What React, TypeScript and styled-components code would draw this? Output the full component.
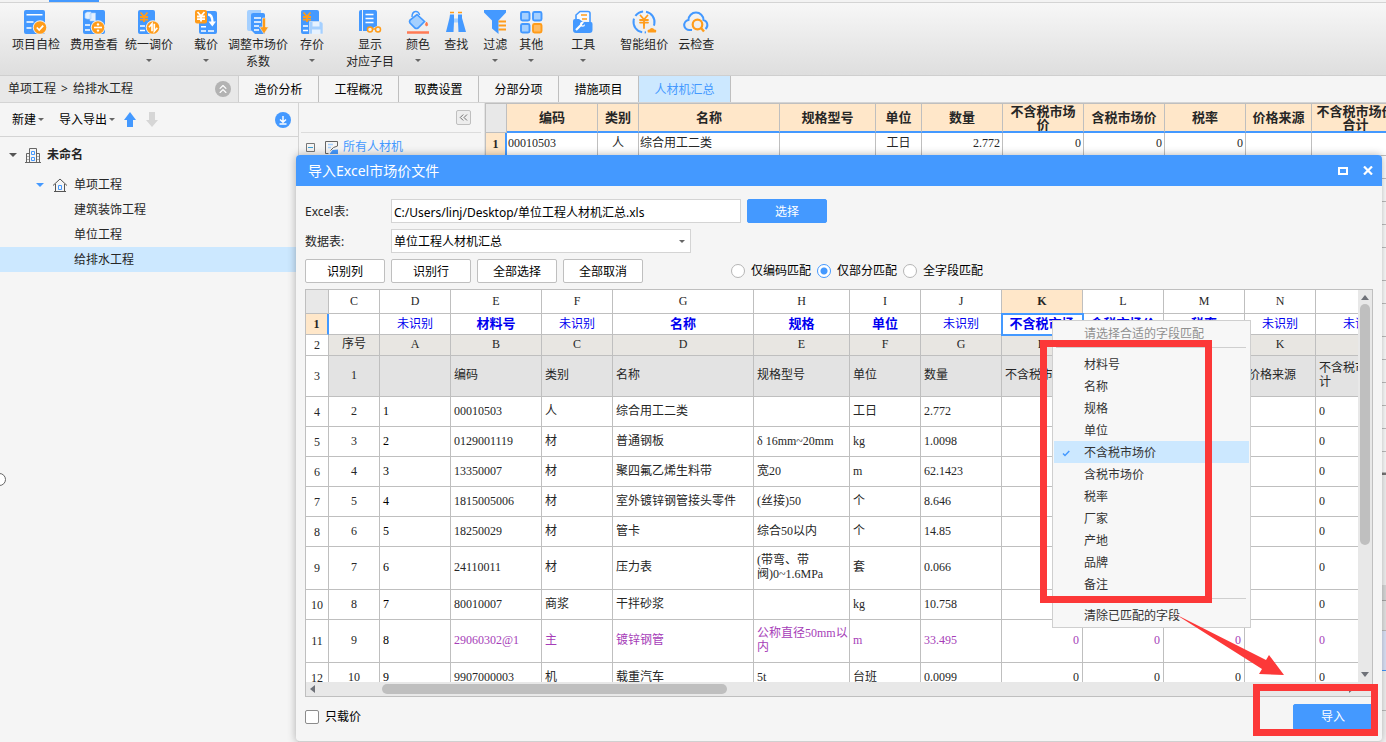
import React from 'react';
import styled, { createGlobalStyle, css } from 'styled-components';
import { ChevronsLeft, ChevronsUp } from 'lucide-react';

const UI_FONT = '"Noto Sans", "Noto Sans CJK SC", sans-serif';
const GRID_FONT = '"Liberation Serif", "Noto Sans CJK SC", serif';
const BLUE = '#4499ff';
const ORANGE = '#ff9c1a';
const LIGHT = '#a5d0ff';
const PICK = '#cce8ff';
const PEACH = '#ffe7c9';
const LINE = '#bfbfbf';
const RED = '#fc3838';

const GlobalStyle = createGlobalStyle`
  * { box-sizing: border-box; }
  body { margin: 0; background: #f5f5f5; font: 12px/16px ${UI_FONT}; color: #262626; }
  button, input, select { font: inherit; color: inherit; }
  button { cursor: pointer; }
  a { color: inherit; text-decoration: none; }
`;

const Shell = styled.div`
  position: relative;
  display: flex;
  flex-direction: column;
  height: 100vh;
  overflow: hidden;
`;

/* ---------- ribbon ---------- */
const TopStrip = styled.div`
  flex: none;
  height: 3px;
  padding-left: 49px;
  background: #f3f3f3;
  border-bottom: 1px solid #d4d4d4;
`;
const ActiveMark = styled.div`
  width: 50px;
  height: 2px;
  background: ${BLUE};
`;
const Ribbon = styled.header`
  flex: none;
  display: flex;
  height: 73px;
  padding: 7px 12px 0;
  background: linear-gradient(#f7f7f7, #dedede);
  border-bottom: 1px solid #cfcfcf;
`;
const RibbonButton = styled.button<{ $before: number }>`
  display: flex;
  flex: none;
  flex-direction: column;
  align-items: center;
  height: 62px;
  margin: 0 0 0 ${p => p.$before}px;
  padding: 0;
  border: 0;
  background: none;
  line-height: 17px;
  white-space: nowrap;

  > svg:first-child { margin-bottom: 2px; overflow: visible; }
`;
const CaretBox = styled.span`
  display: flex;
  align-items: center;
  height: 15px;
`;

/* ---------- tab row ---------- */
const TabRow = styled.nav`
  flex: none;
  display: flex;
  height: 27px;
  border-bottom: 1px solid #d4d4d4;
`;
const Breadcrumb = styled.div`
  flex: none;
  display: flex;
  align-items: center;
  gap: 5px;
  width: 239px;
  padding: 0 7px 0 8px;
  background: #e8e8e8;
  border-right: 1px solid #cfcfcf;
`;
const RoundButton = styled.button<{ $color: string }>`
  display: flex;
  align-items: center;
  justify-content: center;
  width: 16px;
  height: 16px;
  padding: 0;
  border: 0;
  border-radius: 8px;
  background: ${p => p.$color};
  color: #fff;
`;
const Tab = styled.a<{ $active?: boolean }>`
  flex: none;
  display: flex;
  align-items: center;
  justify-content: center;
  width: ${p => (p.$active ? 92 : 80)}px;
  padding-top: 1px;
  border-right: 1px solid ${LINE};
  color: ${p => (p.$active ? BLUE : '#000')};
  background: ${p => (p.$active ? PICK : 'none')};
`;

/* ---------- workspace ---------- */
const Workspace = styled.main`
  flex: 1;
  display: flex;
  min-height: 0;
`;
const ProjectPanel = styled.aside`
  flex: none;
  width: 299px;
  border-right: 1px solid #d4d4d4;
`;
const PanelBar = styled.div`
  display: flex;
  align-items: center;
  height: 34px;
  padding: 0 7px 0 12px;
  border-bottom: 1px solid #d4d4d4;
  color: #000;
`;
const BarButton = styled.button<{ $after?: number }>`
  display: flex;
  align-items: center;
  gap: 2px;
  margin: 0 ${p => p.$after ?? 0}px 0 0;
  padding: 0;
  border: 0;
  background: none;
`;
const Push = styled.div`
  margin-left: auto;
`;
const Tree = styled.ul`
  margin: 0;
  padding: 0;
  list-style: none;
`;
const TreeRow = styled.li<{ $indent: number; $tall?: boolean; $picked?: boolean }>`
  display: flex;
  align-items: center;
  height: ${p => (p.$tall ? 35 : 25)}px;
  padding-left: ${p => p.$indent}px;
  background: ${p => (p.$picked ? PICK : 'none')};

  svg { flex: none; }
  svg + svg { margin: 0 6px 0 8px; }
`;

const FilterPanel = styled.section`
  flex: none;
  width: 186px;
  padding: 0 3px 0 2px;
  border-right: 1px solid #e3e3e3;
`;
const FilterBar = styled.div`
  display: flex;
  justify-content: flex-end;
  height: 30px;
  padding: 7px 10px 0 0;
  border-bottom: 1px solid #dcdcdc;
`;
const SmallButton = styled.button`
  display: flex;
  align-items: center;
  justify-content: center;
  width: 15px;
  height: 15px;
  padding: 0;
  border: 1px solid ${LINE};
  border-radius: 2px;
  background: #ededed;
  color: #555;
`;
const FilterRow = styled.div`
  display: flex;
  align-items: center;
  gap: 5px;
  height: 28px;
  padding-left: 5px;
  color: ${BLUE};

  svg:first-child { margin-right: 5px; }
`;

const ListPanel = styled.section`
  flex: 1;
  min-width: 0;
  overflow: hidden;
`;
const SheetTable = styled.table`
  table-layout: fixed;
  width: 1px;
  border-spacing: 0;
  font: 12px/14px ${GRID_FONT};

  th, td { overflow: hidden; border: solid ${LINE}; border-width: 0 1px 1px 0; }
`;
const MainTable = styled(SheetTable)`
  border-left: 1px solid ${LINE};
  border-top: 1px solid ${LINE};

  thead th {
    height: 29px;
    padding: 0 4px;
    background: ${PEACH};
    border-bottom: 2px solid ${BLUE};
    font-size: 13px;
    line-height: 13px;
  }
  thead td { background: #e8e8e8; }
  tbody th { background: ${PEACH}; border-right: 2px solid ${BLUE}; }
  tbody td { background: #fff; padding: 0 1px 2px; }
`;
const MainRow = styled.tr<{ $h: number }>`
  height: ${p => p.$h}px;
`;
const MainCell = styled.td<{ $align?: string }>`
  text-align: ${p => p.$align ?? 'left'};
  && { padding-right: ${p => (p.$align === 'right' ? 2 : 1)}px; }
`;
const LowerPane = styled.div`
  border-top: 2px solid #777;
  padding-top: 110px;
`;
const LowerBand = styled.div<{ $h: number; $bg: string; $line: string }>`
  height: ${p => p.$h}px;
  background: ${p => p.$bg};
  border-bottom: 1px solid ${p => p.$line};
`;
const Handle = styled.span`
  position: absolute;
  left: -7px;
  top: 473px;
  width: 13px;
  height: 13px;
  border: 1px solid #666;
  border-radius: 7px;
  background: #fff;
`;

/* ---------- dialog ---------- */
const Dialog = styled.section`
  position: absolute;
  inset: 155px 4px 0 296px;
  display: flex;
  flex-direction: column;
  background: #f5f5f5;
  border-bottom: 1px solid #d0d0d0;
  border-radius: 4px;
  box-shadow: 0 0 8px rgba(0, 0, 0, 0.3);
`;
const TitleBar = styled.div`
  flex: none;
  display: flex;
  align-items: center;
  gap: 15px;
  height: 31px;
  padding: 0 9px 0 12px;
  border-radius: 4px 4px 0 0;
  background: ${BLUE};
  color: #fff;
`;
const Title = styled.h1`
  flex: 1;
  margin: 0;
  font-size: 14px;
  line-height: 20px;
  font-weight: 400;
`;
const WindowButton = styled.button`
  display: flex;
  padding: 0;
  border: 0;
  background: none;
  color: #fff;
`;
const DialogBody = styled.div`
  flex: 1;
  display: flex;
  flex-direction: column;
  gap: 6px;
  min-height: 0;
  padding: 13px 9px 0;
`;
const FormRow = styled.div`
  flex: none;
  display: flex;
  align-items: center;
  gap: 6px;
  height: 24px;
`;
const FieldLabel = styled.label`
  width: 80px;
  padding-top: 1px;
`;
const fieldStyle = css`
  height: 24px;
  padding: 1px 2px 0;
  border: 1px solid #d4d4d4;
  border-radius: 0;
  background: #fff;
  color: #000;
`;
const PathInput = styled.input`
  width: 350px;
  ${fieldStyle}
`;
const SelectWrap = styled.div`
  position: relative;
  display: flex;

  svg { position: absolute; right: 6px; top: 11px; pointer-events: none; }
`;
const SheetSelect = styled.select`
  width: 300px;
  appearance: none;
  ${fieldStyle}
`;
const PushButton = styled.button<{ $primary?: boolean }>`
  width: 80px;
  height: 24px;
  padding: 1px 0 0;
  border: 1px solid ${p => (p.$primary ? BLUE : LINE)};
  border-radius: 2px;
  background: ${p => (p.$primary ? BLUE : '#fff')};
  color: ${p => (p.$primary ? '#fff' : '#000')};
`;
const RadioGroup = styled.div`
  display: flex;
  gap: 6px;
  margin-left: 82px;
  color: #000;
`;
const OptionLabel = styled.label`
  display: flex;
  align-items: center;
  gap: 6px;
`;
const Radio = styled.input`
  appearance: none;
  width: 14px;
  height: 14px;
  margin: 0;
  border: 1px solid #b5b5b5;
  border-radius: 7px;
  background: #fff;

  &:checked {
    border-color: ${BLUE};
    background: radial-gradient(circle, ${BLUE} 3px, #fff 4px);
  }
`;
const Check = styled.input`
  appearance: none;
  width: 14px;
  height: 14px;
  margin: 0;
  border: 1px solid #8c8c8c;
  border-radius: 2px;
  background: #fff;
`;

const Sheet = styled.div`
  flex: 1;
  display: grid;
  grid-template: minmax(0, 1fr) 14px / minmax(0, 1fr) 14px;
  min-height: 0;
  border: 1px solid ${LINE};
  background: #e8e8e8;
`;
const SheetView = styled.div`
  overflow: hidden;
  background: #fff;
`;
const MatchTable = styled(SheetTable)`
  td, th { padding: 0 3px; font-weight: 400; }
`;
const MatchRow = styled.tr<{ $h: number; $bg?: string; $color?: string }>`
  height: ${p => p.$h}px;
  color: ${p => p.$color ?? 'inherit'};

  td { background: ${p => p.$bg ?? '#fff'}; }
`;
const HeadCell = styled.th<{ $on?: boolean }>`
  text-align: center;
  && { padding-bottom: 2px; }
  ${p => p.$on && css`&& { background: ${PEACH}; font-weight: 700; }`}
`;
const RowNumber = styled.th<{ $on?: boolean }>`
  text-align: center;
  color: #262626;
  ${p => p.$on && css`&& { background: ${PEACH}; font-weight: 700; border-right: 2px solid ${BLUE}; }`}
`;
const Corner = styled.td`
  && { background: #e8e8e8; }
`;
const DataCell = styled.td<{ $align?: string; $ink?: string }>`
  text-align: ${p => p.$align ?? 'left'};
  color: ${p => p.$ink ?? 'inherit'};
  && {
    padding-bottom: 2px;
    padding-left: ${p => (p.$align === 'center' ? 0 : 3)}px;
    padding-right: ${p => (p.$align === 'right' ? 3 : 0)}px;
  }
`;
const FieldCell = styled.td<{ $bold: boolean; $on: boolean }>`
  text-align: center;
  color: #0000f0;
  && {
    padding-bottom: 1px;
    font-weight: ${p => (p.$bold ? 700 : 400)};
    font-size: ${p => (p.$bold ? 13 : 12)}px;
  }
  ${p => p.$on && css`outline: 2px solid ${BLUE}; outline-offset: -1px;`}
`;
const OneLine = styled.div`
  height: 14px;
  overflow: hidden;
`;
const Wide = styled.span`
  display: block;
  white-space: nowrap;
`;

const VBar = styled.div`
  display: flex;
  flex-direction: column;
  align-items: center;
  padding: 5px 0;
`;
const VThumb = styled.div`
  flex: 0 0 63%;
  width: 10px;
  margin: 4px 0 auto;
  border-radius: 5px;
  background: ${LINE};
`;
const HBar = styled.div`
  display: flex;
  align-items: center;
  padding: 0 4px;
`;
const HThumb = styled.div`
  flex: 0 0 33%;
  height: 10px;
  margin: 0 auto 0 67px;
  border-radius: 5px;
  background: ${LINE};
`;
const Footer = styled.footer`
  flex: none;
  display: flex;
  align-items: center;
  justify-content: space-between;
  height: 44px;
  padding: 0 9px 5px;
  color: #000;
`;
const ImportButton = styled(PushButton)`
  height: 26px;
`;

/* ---------- pop-up menu ---------- */
const Menu = styled.div`
  position: absolute;
  left: 756px;
  top: 165px;
  width: 199px;
  padding: 1px;
  border: 1px solid #cfcfcf;
  background: #f7f7f7;
`;
const MenuItem = styled.button<{ $picked?: boolean; $muted?: boolean }>`
  display: flex;
  align-items: center;
  width: 100%;
  height: 22px;
  padding: 2px 0 0;
  border: 0;
  background: ${p => (p.$picked ? PICK : 'none')};
  color: ${p => (p.$muted ? '#8f8f8f' : '#333')};
`;
const MenuMark = styled.span`
  display: flex;
  width: 30px;
  padding-left: 8px;
`;
const MenuRule = styled.hr`
  height: 1px;
  margin: 3px 3px 5px 2px;
  border: 0;
  background: #cfcfcf;
`;

/* ---------- callouts ---------- */
const FieldsFrame = styled.div`
  position: absolute;
  left: 744px;
  top: 185px;
  width: 172px;
  height: 263px;
  border: 7px solid ${RED};
  pointer-events: none;
`;
const ImportFrame = styled.div`
  position: absolute;
  right: 4px;
  bottom: 5px;
  width: 125px;
  height: 52px;
  border: 7px solid ${RED};
  pointer-events: none;
`;
const ArrowDrawing = styled.svg`
  position: absolute;
  left: 879px;
  top: 459px;
  pointer-events: none;
`;

/* ---------- drawings ---------- */
const Caret = ({ color = '#666', size = 6 }: { color?: string; size?: number }) => (
  <svg width={size} height={size / 2} viewBox="0 0 6 3"><path d="M0 0h6L3 3z" fill={color} /></svg>
);
const Yen = ({ x, y, color }: { x: number; y: number; color: string }) => (
  <path transform={`translate(${x} ${y})`} d="M-3.5-4.5L0-.5L3.5-4.5M-4 0H4M-4 2.6H4M0-.5V5" stroke={color} strokeWidth="1.8" fill="none" />
);
const Badge = ({ children }: { children: React.ReactNode }) => (
  <g>
    <circle cx="16" cy="17.500" r="7.200" fill="#f0f0f0" />
    <circle cx="16" cy="17.500" r="6.300" fill={ORANGE} />
    {children}
  </g>
);

const icons: Record<string, React.ReactNode> = {
  check: (
    <>
      <rect width="21" height="24" rx="2" fill={BLUE} />
      <path d="M2.500 4.700h16M2.500 12h7M2.500 18h5" stroke="#fff" strokeWidth="1.600" />
      <Badge><path d="M12.800 17.500l2.400 2.500l4-4.400" stroke="#fff" strokeWidth="1.800" fill="none" /></Badge>
    </>
  ),
  fee: (
    <>
      <rect x="1" width="22" height="24" rx="2" fill={BLUE} />
      <path d="M3 3.500l2-1.500h4v7H5l-2-1zM8 4l1.500-1h4v8H8z" fill="#e3f0ff" stroke={LIGHT} strokeWidth=".6" />
      <path d="M3 15h5M3 20h5" stroke="#fff" strokeWidth="1.600" />
      <Badge>
        <path d="M12 17.500h8" stroke="#fff" strokeWidth="1.600" />
        <circle cx="16" cy="14.400" r="1.200" fill="#fff" /><circle cx="16" cy="20.600" r="1.200" fill="#fff" />
      </Badge>
    </>
  ),
  adjust: (
    <>
      <rect x="1" width="17" height="24" rx="2" fill={BLUE} />
      <Yen x={7} y={7} color={ORANGE} />
      <path d="M3 16h5M3 20.500h5" stroke="#fff" strokeWidth="1.600" />
      <Badge><path d="M15 21.200v-7.500l-3 3.500M17.300 13.800v7.500l3-3.500" stroke="#fff" strokeWidth="1.700" fill="none" /></Badge>
    </>
  ),
  load: (
    <>
      <rect x="5" y="1" width="18" height="23" rx="2" fill={BLUE} />
      <rect x="1" width="12" height="13.500" rx="2" fill={ORANGE} />
      <Yen x={7} y={6.5} color="#fff" />
      <path d="M14 4.500c4 0 4.500 4 4.500 8" stroke="#fff" strokeWidth="2.400" fill="none" />
      <path d="M14.500 11.500h7.500l-3.700 5z" fill="#fff" />
      <path d="M7 16.800h5M7 21h5M14 21h6" stroke="#fff" strokeWidth="1.500" />
    </>
  ),
  factor: (
    <>
      <path d="M1 2q0-2 2-2h12v3H6v18H3q-2 0-2-2z" fill={LIGHT} />
      <path d="M5 5q0-2 2-2h10q2 0 2 2v19H9l-4-4z" fill={BLUE} />
      <path d="M8 8h7M8 12h7M8 16h5M8 20h5" stroke="#fff" strokeWidth="1.500" />
      <path d="M16.500 8h3v9h3L18 24l-4.500-7h3z" fill={ORANGE} stroke="#f0f0f0" strokeWidth=".6" />
    </>
  ),
  save: (
    <>
      <rect x="1" width="18" height="24" rx="2" fill={BLUE} />
      <Yen x={7} y={7} color={ORANGE} />
      <path d="M3 16h5M3 20.500h5" stroke="#fff" strokeWidth="1.600" />
      <path d="M9.500 11.500h11.500l2 2V24H9.500z" fill={LIGHT} stroke="#f0f0f0" strokeWidth=".6" />
      <path d="M12.500 12v4.500h7V12M12 24v-4.500h8.500V24" fill="#e6f2ff" />
    </>
  ),
  show: (
    <>
      <path d="M1 2q0-2 2-2h1v21H1z" fill={BLUE} />
      <path d="M5 0h12q2 0 2 2v14l-4 2-3 3H5z" fill={BLUE} />
      <path d="M7.500 4.500h8M7.500 8.500h8M7.500 12.500h8" stroke="#fff" strokeWidth="1.600" />
      <circle cx="12" cy="19.500" r="2.500" fill="#f0f0f0" stroke={ORANGE} strokeWidth="1.500" />
      <circle cx="20" cy="19.500" r="2.500" fill="#f0f0f0" stroke={ORANGE} strokeWidth="1.500" />
      <path d="M14.500 19h3" stroke={ORANGE} strokeWidth="1.500" />
    </>
  ),
  colour: (
    <>
      <path d="M6 7c0-7 7-7 7.500-2" fill="none" stroke={BLUE} strokeWidth="1.500" />
      <path d="M11 4.500l7.500 7l-6.500 6.500q-1.500 1-3 0L4 13q-1-1.500 0-3z" fill={LIGHT} stroke={BLUE} strokeWidth="1.700" />
      <path d="M20.500 12q-2 3.500 0 4q2.200-.5 0-4z" fill="#ff7a4d" stroke="#ff7a4d" />
      <path d="M1 22.500h22" stroke="#ff7a55" strokeWidth="2.500" />
    </>
  ),
  find: (
    <>
      <path d="M6 2.500h4M14 2.500h4" stroke={ORANGE} strokeWidth="1.600" />
      <path d="M6 4.500h4V12l-.5 10H2L5.500 8zM14 4.500h4V8l4 14h-7.500L14 12z" fill={BLUE} />
      <path d="M10 8.500h4v4h-4z" fill={LIGHT} />
    </>
  ),
  filter: (
    <>
      <path d="M1 0h22v2.500l-7.500 8V24L9 18.500v-8l-8-8z" fill={BLUE} />
      <path d="M15.500 11.500h7.500M15.500 15.500h7.500M15.500 19.500h7.500" stroke={ORANGE} strokeWidth="1.800" />
    </>
  ),
  other: (
    <>
      {[[2, 2], [14, 2], [2, 14]].map(([x, y]) => (
        <rect key={`${x}-${y}`} x={x} y={y} width="8.500" height="8.500" rx="1.500" fill={LIGHT} stroke={BLUE} strokeWidth="1.900" />
      ))}
      <rect x="14" y="14" width="8.500" height="8.500" rx="1.500" fill="#ffbb61" stroke={ORANGE} strokeWidth="1.900" />
    </>
  ),
  tool: (
    <>
      <path d="M5 9V5l4-3.500h8q2 0 2 2V12" fill="#f4f9ff" stroke={BLUE} strokeWidth="1.600" />
      <path d="M10 5h6M11 9h5" stroke={ORANGE} strokeWidth="1.600" />
      <path d="M4 9h4l4 3h8q1.500 0 1.500 2v6q0 3-3 3H5q-3 0-3-3v-9q0-2 2-2z" fill={BLUE} />
      <path d="M5 20l5-5" stroke="#fff" strokeWidth="2.200" />
      <path d="M13 12.500l-2 2 .7 1.300 2.300-1.600a2.500 2.500 0 1 1-2.500-2.500" fill="#fff" />
    </>
  ),
  smart: (
    <>
      <circle cx="12" cy="12" r="10.500" fill="none" stroke={BLUE} strokeWidth="2" strokeDasharray="18 3 9 3" transform="rotate(100 12 12)" />
      <g strokeLinecap="round">
        <Yen x={12} y={10} color={ORANGE} />
        <path d="M12 13v5" stroke={ORANGE} strokeWidth="1.800" />
      </g>
      <path d="M14 24v-5h2a3 3 0 0 1 6 0h3v5z" fill="#eee" />
      <path d="M16 22.500q-1.500-3 1.500-3a2.600 2.600 0 0 1 4.800 0q3 0 1.500 3z" fill={ORANGE} />
    </>
  ),
  cloud: (
    <>
      <path d="M8 20H6A5 5 0 0 1 4.500 10a7.500 7.500 0 0 1 15 0a5.200 5.200 0 0 1 2 9" fill="none" stroke={BLUE} strokeWidth="2" />
      <circle cx="13.500" cy="14.500" r="4.800" fill="none" stroke={ORANGE} strokeWidth="2.200" />
      <path d="M17 18l3 3.500" stroke={ORANGE} strokeWidth="2.400" />
    </>
  ),
};

const ribbon: { icon: string; label: string; line2?: string; caret?: boolean; before: number }[] = [
  { icon: 'check', label: '项目自检', before: 0 },
  { icon: 'fee', label: '费用查看', before: 10 },
  { icon: 'adjust', label: '统一调价', caret: true, before: 7 },
  { icon: 'load', label: '载价', caret: true, before: 21 },
  { icon: 'factor', label: '调整市场价', line2: '系数', before: 10 },
  { icon: 'save', label: '存价', caret: true, before: 12 },
  { icon: 'show', label: '显示', line2: '对应子目', before: 22 },
  { icon: 'colour', label: '颜色', caret: true, before: 12 },
  { icon: 'find', label: '查找', before: 14 },
  { icon: 'filter', label: '过滤', caret: true, before: 15 },
  { icon: 'other', label: '其他', caret: true, before: 12 },
  { icon: 'tool', label: '工具', caret: true, before: 28 },
  { icon: 'smart', label: '智能组价', before: 25 },
  { icon: 'cloud', label: '云检查', before: 10 },
];

const tabs = ['造价分析', '工程概况', '取费设置', '分部分项', '措施项目', '人材机汇总'];

const mainCols: [string, number][] = [
  ['编码', 91], ['类别', 41], ['名称', 141], ['规格型号', 96], ['单位', 46], ['数量', 81],
  ['不含税市场价', 81], ['含税市场价', 81], ['税率', 81], ['价格来源', 66], ['不含税市场价合计', 88],
];
const mainFirst: [string, string][] = [
  ['00010503', 'left'], ['人', 'center'], ['综合用工二类', 'left'], ['', 'left'], ['工日', 'center'],
  ['2.772', 'right'], ['0', 'right'], ['0', 'right'], ['0', 'right'], ['', 'left'], ['', 'left'],
];
const mainHeights = [23, 23, 23, 23, 23, 33, 23, 33, 23, 23, 23, 23, 23, 21];

const matchCols: [string, number][] = [
  ['C', 51], ['D', 71], ['E', 91], ['F', 71], ['G', 141], ['H', 96], ['I', 71], ['J', 81],
  ['K', 81], ['L', 81], ['M', 81], ['N', 71], ['', 91],
];
const fields = ['', '未识别', '材料号', '未识别', '名称', '规格', '单位', '未识别', '不含税市场价', '含税市场价', '税率', '未识别', '未识别'];
const letters = ['序号', 'A', 'B', 'C', 'D', 'E', 'F', 'G', 'H', 'I', 'J', 'K', ''];
const titles = ['1', '', '编码', '类别', '名称', '规格型号', '单位', '数量', '不含税市场价', '含税市场价', '税率', '价格来源', '不含税市场价合计'];
const records: { h: number; cells: string[]; main?: boolean }[] = [
  { h: 30, cells: ['1', '00010503', '人', '综合用工二类', '', '工日', '2.772'] },
  { h: 30, cells: ['2', '0129001119', '材', '普通钢板', 'δ 16mm~20mm', 'kg', '1.0098'] },
  { h: 30, cells: ['3', '13350007', '材', '聚四氟乙烯生料带', '宽20', 'm', '62.1423'] },
  { h: 30, cells: ['4', '1815005006', '材', '室外镀锌钢管接头零件', '(丝接)50', '个', '8.646'] },
  { h: 30, cells: ['5', '18250029', '材', '管卡', '综合50以内', '个', '14.85'] },
  { h: 43, cells: ['6', '24110011', '材', '压力表', '(带弯、带阀)0~1.6MPa', '套', '0.066'] },
  { h: 30, cells: ['7', '80010007', '商浆', '干拌砂浆', '', 'kg', '10.758'] },
  { h: 43, cells: ['8', '29060302@1', '主', '镀锌钢管', '公称直径50mm以内', 'm', '33.495'], main: true },
  { h: 30, cells: ['9', '9907000003', '机', '载重汽车', '5t', '台班', '0.0099'] },
];
const menuFields = ['材料号', '名称', '规格', '单位', '不含税市场价', '含税市场价', '税率', '厂家', '产地', '品牌', '备注'];

const MainList = () => (
  <ListPanel>
    <MainTable>
      <colgroup>
        <col style={{ width: 21 }} />
        {mainCols.map(([name, w]) => <col key={name} style={{ width: w }} />)}
      </colgroup>
      <thead>
        <tr><td />{mainCols.map(([name]) => <th key={name}>{name}</th>)}</tr>
      </thead>
      <tbody>
        {mainHeights.map((h, r) => (
          <MainRow key={r} $h={h}>
            <th>{r === 0 ? '1' : ''}</th>
            {mainFirst.map(([text, align], c) => <MainCell key={c} $align={align}>{r === 0 ? text : ''}</MainCell>)}
          </MainRow>
        ))}
      </tbody>
    </MainTable>
    <LowerPane>
      <LowerBand $h={16} $bg="#dcdcdc" $line="#aaa" />
      <LowerBand $h={30} $bg="#e8e8e8" $line={LINE} />
      <LowerBand $h={40} $bg="#dfe6fb" $line={BLUE} />
      <LowerBand $h={40} $bg="#f5f5f5" $line={LINE} />
    </LowerPane>
  </ListPanel>
);

const MatchSheet = () => (
  <Sheet>
    <SheetView>
      <MatchTable>
        <colgroup>
          <col style={{ width: 23 }} />
          {matchCols.map(([name, w]) => <col key={name} style={{ width: w }} />)}
        </colgroup>
        <thead>
          <MatchRow $h={24}>
            <Corner />
            {matchCols.map(([name]) => <HeadCell key={name} $on={name === 'K'}>{name}</HeadCell>)}
          </MatchRow>
        </thead>
        <tbody>
          <MatchRow $h={21}>
            <RowNumber $on>1</RowNumber>
            {fields.map((f, i) => (
              <FieldCell key={i} $bold={f !== '未识别'} $on={i === 8}><OneLine>{f}</OneLine></FieldCell>
            ))}
          </MatchRow>
          <MatchRow $h={21} $bg="#e8e6e2">
            <RowNumber>2</RowNumber>
            {letters.map((l, i) => <DataCell key={i} $align="center">{l}</DataCell>)}
          </MatchRow>
          <MatchRow $h={41} $bg="#e3e3e3">
            <RowNumber>3</RowNumber>
            {titles.map((t, i) => (
              <DataCell key={i} $align={i === 0 ? 'center' : 'left'}>{t}</DataCell>
            ))}
          </MatchRow>
          {records.map((rec, r) => (
            <MatchRow key={r} $h={rec.h} $color={rec.main ? '#a63db8' : undefined}>
              <RowNumber>{r + 4}</RowNumber>
              <DataCell $align="center" $ink="#262626">{r + 2}</DataCell>
              {rec.cells.map((c, i) => (
                <DataCell key={i} $ink={i === 0 ? '#000' : undefined}>{i === 3 ? <Wide>{c}</Wide> : c}</DataCell>
              ))}
              <DataCell $align="right">0</DataCell>
              <DataCell $align="right">0</DataCell>
              <DataCell $align="right">0</DataCell>
              <DataCell />
              <DataCell>0</DataCell>
            </MatchRow>
          ))}
        </tbody>
      </MatchTable>
    </SheetView>
    <VBar>
      <svg width="10" height="5" viewBox="0 0 10 5"><path d="M1 5h8L5 0z" fill="#6e7178" /></svg>
      <VThumb />
      <svg width="10" height="5" viewBox="0 0 10 5"><path d="M1 0h8L5 5z" fill="#6e7178" /></svg>
    </VBar>
    <HBar>
      <svg width="5" height="8" viewBox="0 0 5 8"><path d="M5 0v8L0 4z" fill="#6e7178" /></svg>
      <HThumb />
      <svg width="5" height="8" viewBox="0 0 5 8"><path d="M0 0v8L5 4z" fill="#6e7178" /></svg>
    </HBar>
  </Sheet>
);

const FieldMenu = () => (
  <Menu>
    <MenuItem $muted disabled><MenuMark />请选择合适的字段匹配</MenuItem>
    <MenuRule />
    {menuFields.map(f => (
      <MenuItem key={f} $picked={f === '不含税市场价'}>
        <MenuMark>
          {f === '不含税市场价' && (
            <svg width="8" height="7" viewBox="0 0 8 7"><path d="M1 3.500L3 5.500L7.300 1" stroke={BLUE} strokeWidth="1.500" fill="none" /></svg>
          )}
        </MenuMark>
        {f}
      </MenuItem>
    ))}
    <MenuRule />
    <MenuItem><MenuMark />清除已匹配的字段</MenuItem>
  </Menu>
);

export default function App() {
  return (
    <Shell>
      <GlobalStyle />
      <TopStrip><ActiveMark /></TopStrip>
      <Ribbon>
        {ribbon.map(b => (
          <RibbonButton key={b.label} $before={b.before}>
            <svg width="24" height="24" viewBox="0 0 24 24">{icons[b.icon]}</svg>
            <span>{b.label}</span>
            {b.line2 && <span>{b.line2}</span>}
            {b.caret && <CaretBox><Caret /></CaretBox>}
          </RibbonButton>
        ))}
      </Ribbon>
      <TabRow>
        <Breadcrumb>
          <span>单项工程</span>
          <span>&gt;</span>
          <span>给排水工程</span>
          <Push>
            <RoundButton $color="#b3b3b3" aria-label="收起"><ChevronsUp size={14} /></RoundButton>
          </Push>
        </Breadcrumb>
        {tabs.map((t, i) => <Tab key={t} href="#" $active={i === 5}>{t}</Tab>)}
      </TabRow>
      <Workspace>
        <ProjectPanel>
          <PanelBar>
            <BarButton $after={15}>新建<Caret size={6} /></BarButton>
            <BarButton $after={9}>导入导出<Caret size={6} /></BarButton>
            <BarButton $after={10} aria-label="上移">
              <svg width="12" height="15" viewBox="0 0 12 15"><path d="M6 0l6 8H9v7H3V8H0z" fill={BLUE} /></svg>
            </BarButton>
            <BarButton aria-label="下移">
              <svg width="12" height="15" viewBox="0 0 12 15"><path d="M6 15l6-7H9V0H3v8H0z" fill="#d6d6d6" /></svg>
            </BarButton>
            <Push>
              <RoundButton $color={BLUE} aria-label="下载">
                <svg width="10" height="10" viewBox="0 0 10 10"><path d="M5 1v6M2 4.500L5 7.300L8 4.500M1.500 9h7" stroke="#fff" strokeWidth="1.400" fill="none" /></svg>
              </RoundButton>
            </Push>
          </PanelBar>
          <Tree>
            <TreeRow $indent={9} $tall>
              <svg width="8" height="4" viewBox="0 0 8 4"><path d="M0 0h8L4 4z" fill="#555" /></svg>
              <svg width="16" height="16" viewBox="0 0 16 16" fill="none">
                <path d="M0 15.500h16M4.500 15.500V1.500h7v14M1.500 15.500v-9h3M14.500 15.500v-9h-3M2.500 9.500h1M2.500 12.500h1M12.500 9.500h1M12.500 12.500h1" stroke="#666" />
                <path d="M6.500 4.500h3v3h-3zM6.500 10.500h3v3h-3z" stroke={BLUE} />
              </svg>
              <b>未命名</b>
            </TreeRow>
            <TreeRow $indent={36}>
              <svg width="8" height="4" viewBox="0 0 8 4"><path d="M0 0h8L4 4z" fill={BLUE} /></svg>
              <svg width="16" height="14" viewBox="0 0 16 14" fill="none">
                <path d="M1 7.500L8 1l7 6.500M3.500 6v7.500M12.500 6v7.500M2 13.500h12" stroke="#555" />
                <path d="M6.500 7.500h3v4h-3z" stroke={BLUE} />
              </svg>
              单项工程
            </TreeRow>
            <TreeRow $indent={74}>建筑装饰工程</TreeRow>
            <TreeRow $indent={74}>单位工程</TreeRow>
            <TreeRow $indent={74} $picked>给排水工程</TreeRow>
          </Tree>
        </ProjectPanel>
        <FilterPanel>
          <FilterBar>
            <SmallButton aria-label="折叠"><ChevronsLeft size={13} strokeWidth={1.5} /></SmallButton>
          </FilterBar>
          <FilterRow>
            <svg width="9" height="9" viewBox="0 0 9 9" fill="none"><path d="M.5.5h8v8h-8z" stroke="#777" /><path d="M2 4.500h5" stroke="#3aa0d8" /></svg>
            <svg width="13" height="13" viewBox="0 0 13 13" fill="none">
              <path d="M12.500 5V.5H.5v12h3M12.500 5l-4 1.500l-3 3" stroke="#666" />
              <path d="M3 3.500h5M3 6.500h3" stroke={LIGHT} strokeWidth="1.500" />
              <path d="M4.500 13l3-4l5.500-.5V13z" fill={BLUE} />
            </svg>
            <span>所有人材机</span>
          </FilterRow>
        </FilterPanel>
        <MainList />
      </Workspace>
      <Handle />

      <Dialog role="dialog" aria-labelledby="dialog-title">
        <TitleBar>
          <Title id="dialog-title">导入Excel市场价文件</Title>
          <WindowButton aria-label="最大化">
            <svg width="10" height="8" viewBox="0 0 10 8"><path d="M1 1h8v6H1z" fill="none" stroke="#fff" strokeWidth="2" /></svg>
          </WindowButton>
          <WindowButton aria-label="关闭">
            <svg width="10" height="9" viewBox="0 0 10 9"><path d="M1 .5l8 8M9 .5l-8 8" stroke="#fff" strokeWidth="2.200" /></svg>
          </WindowButton>
        </TitleBar>
        <DialogBody>
          <FormRow>
            <FieldLabel htmlFor="path">Excel表:</FieldLabel>
            <PathInput id="path" defaultValue="C:/Users/linj/Desktop/单位工程人材机汇总.xls" />
            <PushButton $primary>选择</PushButton>
          </FormRow>
          <FormRow>
            <FieldLabel htmlFor="sheet">数据表:</FieldLabel>
            <SelectWrap>
              <SheetSelect id="sheet"><option>单位工程人材机汇总</option></SheetSelect>
              <Caret size={6} />
            </SelectWrap>
          </FormRow>
          <FormRow>
            <PushButton>识别列</PushButton>
            <PushButton>识别行</PushButton>
            <PushButton>全部选择</PushButton>
            <PushButton>全部取消</PushButton>
            <RadioGroup>
              <OptionLabel><Radio type="radio" name="mode" />仅编码匹配</OptionLabel>
              <OptionLabel><Radio type="radio" name="mode" defaultChecked />仅部分匹配</OptionLabel>
              <OptionLabel><Radio type="radio" name="mode" />全字段匹配</OptionLabel>
            </RadioGroup>
          </FormRow>
          <MatchSheet />
        </DialogBody>
        <Footer>
          <OptionLabel><Check type="checkbox" />只载价</OptionLabel>
          <ImportButton $primary>导入</ImportButton>
        </Footer>
        <FieldMenu />
        <FieldsFrame />
        <ImportFrame />
        <ArrowDrawing width="110" height="62" viewBox="0 0 110 62">
          <path d="M0 0L91 46L94 41L109 61L84 60L87 55z" fill={RED} />
        </ArrowDrawing>
      </Dialog>
    </Shell>
  );
}
